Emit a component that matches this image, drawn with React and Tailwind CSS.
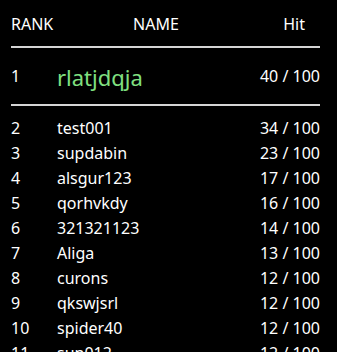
import React from "react";

const rows = [
    { rank: 2, name: "test001", hit: 34 },
    { rank: 3, name: "supdabin", hit: 23 },
    { rank: 4, name: "alsgur123", hit: 17 },
    { rank: 5, name: "qorhvkdy", hit: 16 },
    { rank: 6, name: "321321123", hit: 14 },
    { rank: 7, name: "Aliga", hit: 13 },
    { rank: 8, name: "curons", hit: 12 },
    { rank: 9, name: "qkswjsrl", hit: 12 },
    { rank: 10, name: "spider40", hit: 12 },
    { rank: 11, name: "sun012", hit: 12 },
];

const App = () => {
    return (
        <div className="h-[352px] w-[337px] overflow-hidden bg-black px-[11px] pt-[12px] font-['Noto_Sans',sans-serif] text-[16px] text-white">
            <div className="flex w-[309px] leading-[24px]">
                <span className="w-[46px]">RANK</span>
                <span className="w-[198px] text-center">NAME</span>
                <span className="flex-1 pr-[15px] text-right">Hit</span>
            </div>
            <div className="mt-[10px] h-[2px] w-[309px] bg-[#d4d4d4]" />

            <div className="flex h-[56px] w-[309px] items-center">
                <span className="w-[46px]">1</span>
                <span className="mt-[3px] flex-1 text-[22px] text-[#80e080]">rlatjdqja</span>
                <span>40 / 100</span>
            </div>
            <div className="h-[2px] w-[309px] bg-[#d4d4d4]" />

            <div className="mt-[10px]">
                {rows.map((row) => (
                    <div key={row.rank} className="flex h-[25px] w-[309px] items-center leading-[25px]">
                        <span className="w-[46px]">{row.rank}</span>
                        <span className="flex-1">{row.name}</span>
                        <span>{row.hit} / 100</span>
                    </div>
                ))}
            </div>
        </div>
    );
};

export default App;
